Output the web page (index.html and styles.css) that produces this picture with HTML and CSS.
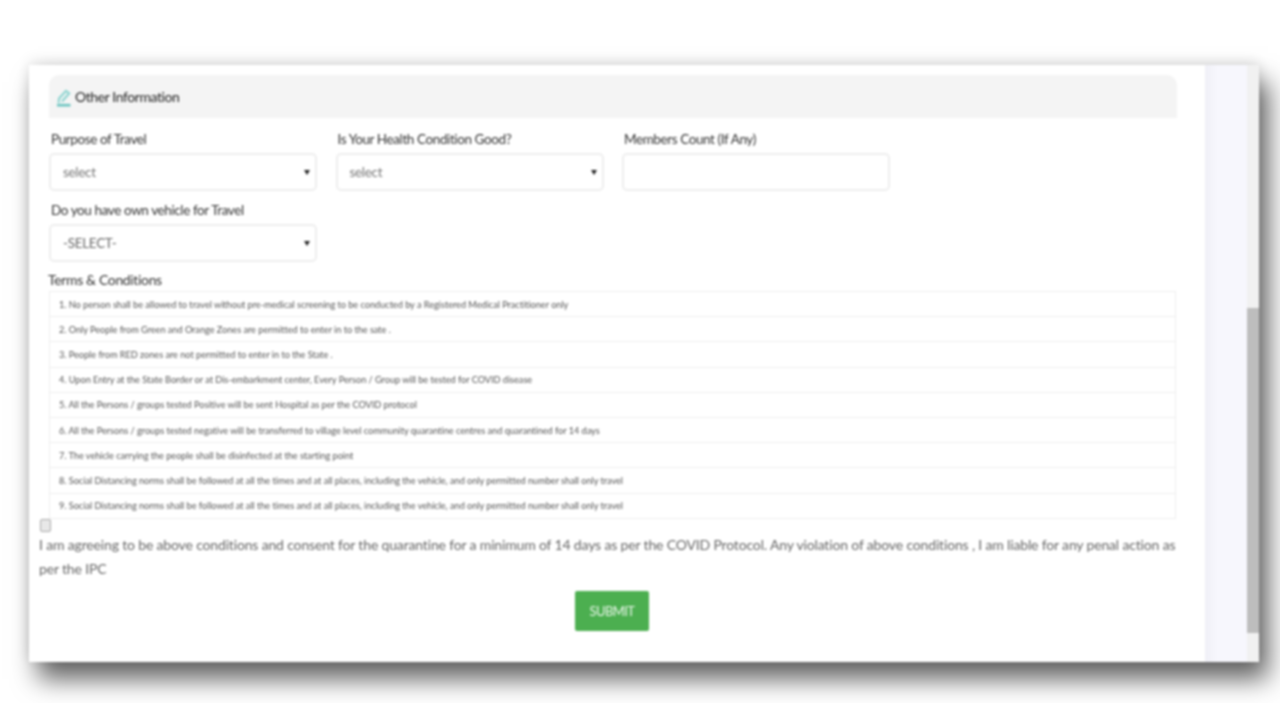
FILE: index.html
```html
<!DOCTYPE html>
<html lang="en">
<head>
<meta charset="utf-8">
<title>Other Information</title>
<link rel="stylesheet" href="styles.css">
</head>
<body>
<div class="stage">
  <div class="window">
    <main class="content">
      <div class="panel-head">
        <svg class="icon" viewBox="0 0 16 18" width="16" height="18" aria-hidden="true">
          <path d="M1 16.2h13.5" fill="none" stroke="#6cc4c0" stroke-width="2.6"/>
          <path d="M2.6 14 3 9.5 10 1.8l3.2 2.6L6 12.5" fill="none" stroke="#8ad3cf" stroke-width="2"/>
        </svg>
        <span>Other Information</span>
      </div>
      <div class="fields">
        <div class="field">
          <label class="label">Purpose of Travel</label>
          <div class="select"><select><option>select</option></select></div>
        </div>
        <div class="field">
          <label class="label">Is Your Health Condition Good?</label>
          <div class="select"><select><option>select</option></select></div>
        </div>
        <div class="field">
          <label class="label">Members Count (If Any)</label>
          <input class="input" type="text">
        </div>
        <div class="field">
          <label class="label">Do you have own vehicle for Travel</label>
          <div class="select"><select class="upper"><option>-SELECT-</option></select></div>
        </div>
      </div>
      <div class="terms-title">Terms &amp; Conditions</div>
      <table class="terms">
        <tr><td>1. No person shall be allowed to travel without pre-medical screening to be conducted by a Registered Medical Practitioner only</td></tr>
        <tr><td>2. Only People from Green and Orange Zones are permitted to enter in to the sate .</td></tr>
        <tr><td>3. People from RED zones are not permitted to enter in to the State .</td></tr>
        <tr><td>4. Upon Entry at the State Border or at Dis-embarkment center, Every Person / Group will be tested for COVID disease</td></tr>
        <tr><td>5. All the Persons / groups tested Positive will be sent Hospital as per the COVID protocol</td></tr>
        <tr><td>6. All the Persons / groups tested negative will be transferred to village level community quarantine centres and quarantined for 14 days</td></tr>
        <tr><td>7. The vehicle carrying the people shall be disinfected at the starting point</td></tr>
        <tr><td>8. Social Distancing norms shall be followed at all the times and at all places, including the vehicle, and only permitted number shall only travel</td></tr>
        <tr><td>9. Social Distancing norms shall be followed at all the times and at all places, including the vehicle, and only permitted number shall only travel</td></tr>
      </table>
      <input class="check" type="checkbox">
      <p class="consent">I am agreeing to be above conditions and consent for the quarantine for a minimum of 14 days as per the COVID Protocol. Any violation of above conditions , I am liable for any penal action as per the IPC</p>
      <div class="actions"><button class="submit" type="button">SUBMIT</button></div>
    </main>
    <div class="gutter"></div>
    <div class="scrollbar"><div class="thumb"></div></div>
  </div>
</div>
</body>
</html>
```
FILE: styles.css
```css
* { box-sizing: border-box; }
html, body { margin: 0; height: 100%; background: #fff; }
body { font-family: Lato, "Open Sans", sans-serif; color: #444; overflow: hidden; }

.stage {
  height: 703px;
  padding: 65px 21px 0 29px;
  overflow: hidden;
  background: #fff;
}
.window {
  display: grid;
  grid-template-columns: 1176px 42px 12px;
  width: 1230px;
  height: 597px;
  background: #fff;
  box-shadow: 9px 17px 24px rgba(0, 0, 0, .62), 0 -3px 14px rgba(0, 0, 0, .12);
  filter: blur(.9px);
}
.content { padding: 10px 28px 0 10px; min-width: 0; }

.panel-head {
  display: flex;
  align-items: center;
  gap: 3px;
  height: 43px;
  margin-left: 10px;
  padding-left: 7px;
  background: #f4f4f4;
  border-radius: 10px 10px 0 0;
  font-size: 14px;
  letter-spacing: -.42px;
  color: #222;
}
.icon { flex: none; margin-top: 2px; }

.fields {
  display: grid;
  grid-template-columns: repeat(3, 268px);
  column-gap: 18.5px;
  row-gap: 9px;
  margin: 11px 0 0 10px;
}
.label {
  display: block;
  height: 20px;
  margin: 0 0 4px 2px;
  font-size: 13.5px;
  line-height: 20px;
  letter-spacing: -.4px;
  color: #333;
}
.select { position: relative; }
.select::after {
  content: "";
  position: absolute;
  top: 17px;
  right: 7px;
  border: 3px solid transparent;
  border-top: 5px solid #222;
  border-bottom: 0;
}
.select select, .input {
  display: block;
  width: 100%;
  height: 38px;
  padding: 0 12px;
  background: #fff;
  border: 2px solid #eee;
  border-radius: 5px;
  font: 13.5px Lato, "Open Sans", sans-serif;
  letter-spacing: -.3px;
  color: #777;
  appearance: none;
}
.select .upper { color: #666; }

.terms-title {
  height: 20px;
  margin: 8px 0 1px 9px;
  font-size: 14px;
  line-height: 20px;
  letter-spacing: -.35px;
  color: #333;
}
.terms {
  width: 1127px;
  height: 227px;
  margin-left: 10px;
  border-collapse: collapse;
  table-layout: fixed;
}
.terms td {
  height: 25.2px;
  padding: 0 9px;
  border: 1px solid #eee;
  font-size: 9.2px;
  letter-spacing: -.03px;
  color: #555;
  white-space: nowrap;
}

.check {
  display: block;
  width: 11px;
  height: 13px;
  margin: 0 0 0 1px;
  background: #e8e8e8;
  border: 1px solid #aaa;
  border-radius: 2px;
  appearance: none;
}
.consent {
  width: 1138px;
  margin: 1px 0 0;
  font-size: 14px;
  line-height: 24px;
  letter-spacing: -.16px;
  color: #666;
}
.actions { display: flex; justify-content: center; margin-top: 10px; padding-left: 8px; }
.submit {
  width: 74px;
  height: 40px;
  padding: 0;
  background: #4caf50;
  border: 0;
  border-radius: 2px;
  font: 13px Lato, sans-serif;
  letter-spacing: -.6px;
  color: #eaf6ea;
}

.gutter { background: linear-gradient(90deg, #f0f0f7, #f7f7fd 30%); }
.scrollbar { background: #f1f1f1; padding-top: 243px; }
.thumb { height: 325px; background: #bdbdbd; }
```
